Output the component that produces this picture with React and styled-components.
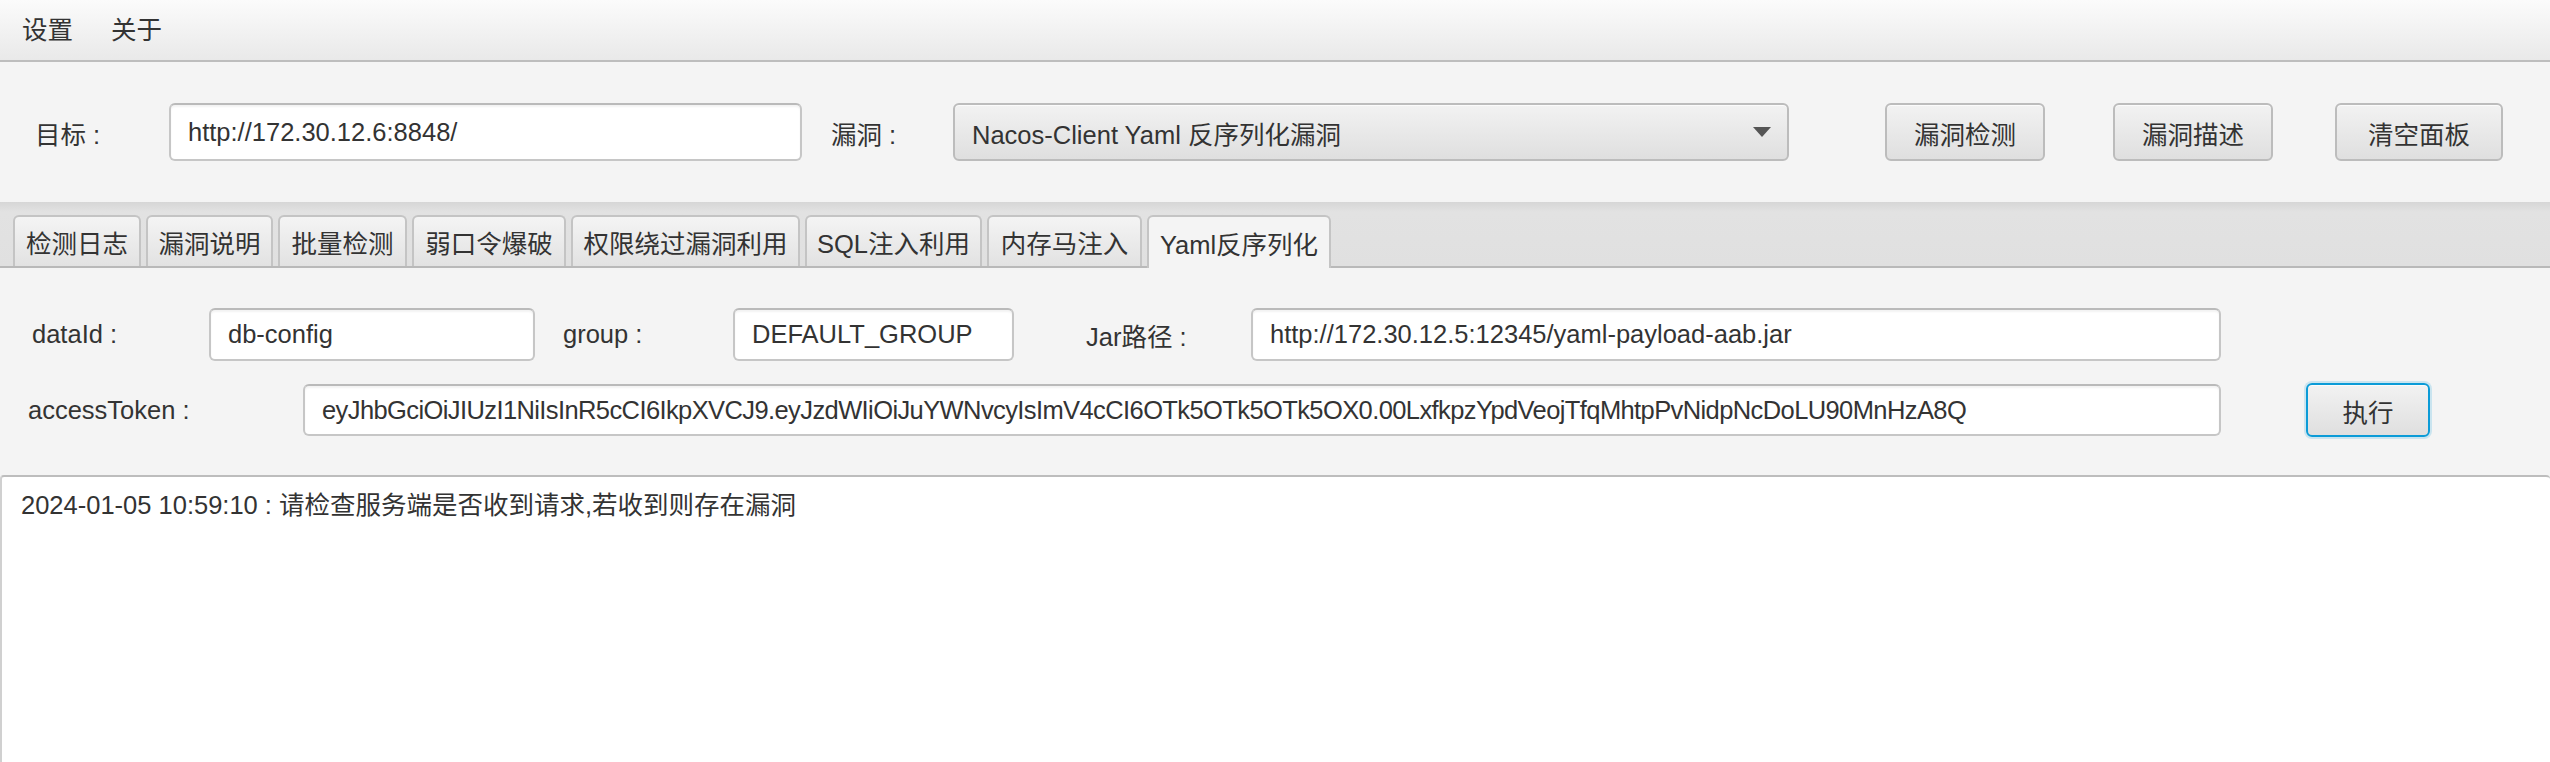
import React from "react";
import styled, { createGlobalStyle } from "styled-components";

const GlobalStyle = createGlobalStyle`
  html, body {
    margin: 0;
    padding: 0;
    background: #ffffff;
  }
  body {
    font-family: "Liberation Sans", "Noto Sans CJK SC", sans-serif;
    font-size: 25.5px;
    color: #333333;
  }
  * {
    box-sizing: border-box;
  }
`;

const tabs = [
  { title: "检测日志", w: 128 },
  { title: "漏洞说明", w: 127 },
  { title: "批量检测", w: 129 },
  { title: "弱口令爆破", w: 154 },
  { title: "权限绕过漏洞利用", w: 229 },
  { title: "SQL注入利用", w: 177 },
  { title: "内存马注入", w: 155 },
  { title: "Yaml反序列化", w: 184, active: true },
];

const App = () => {
  return (
    <Window>
      <GlobalStyle />
      <MenuBar>
        <MenuItem>设置</MenuItem>
        <MenuItem>关于</MenuItem>
      </MenuBar>

      <TopRow>
        <Label $w={134}>目标 :</Label>
        <TextField $w={633} defaultValue="http://172.30.12.6:8848/" />
        <Label $w={122} $ml={29}>漏洞 :</Label>
        <Select $w={836}>
          <span>Nacos-Client Yaml 反序列化漏洞</span>
          <svg width="18" height="10" viewBox="0 0 18 10">
            <polygon points="0,0 18,0 9,10" fill="#555555" />
          </svg>
        </Select>
        <Button $w={160} $ml={96}>漏洞检测</Button>
        <Button $w={160} $ml={68}>漏洞描述</Button>
        <Button $w={168} $ml={62}>清空面板</Button>
      </TopRow>

      <TabHeader>
        {tabs.map((t) => (
          <Tab key={t.title} $w={t.w} $active={t.active}>
            {t.title}
          </Tab>
        ))}
      </TabHeader>

      <TabContent>
        <FormRow $h={53} $pl={32}>
          <Label $w={177}>dataId :</Label>
          <TextField $w={326} $h={53} defaultValue="db-config" />
          <Label $w={170} $ml={28}>group :</Label>
          <TextField $w={281} $h={53} defaultValue="DEFAULT_GROUP" />
          <Label $w={165} $ml={72}>Jar路径 :</Label>
          <TextField
            $w={970}
            $h={53}
            defaultValue="http://172.30.12.5:12345/yaml-payload-aab.jar"
          />
        </FormRow>
        <FormRow $h={54} $pl={28}>
          <Label $w={275}>accessToken :</Label>
          <TextField
            $w={1918}
            $h={52}
            $ls={-0.6}
            defaultValue="eyJhbGciOiJIUzI1NiIsInR5cCI6IkpXVCJ9.eyJzdWIiOiJuYWNvcyIsImV4cCI6OTk5OTk5OTk5OX0.00LxfkpzYpdVeojTfqMhtpPvNidpNcDoLU90MnHzA8Q"
          />
          <Button $w={124} $h={54} $ml={85} $focused>执行</Button>
        </FormRow>
      </TabContent>

      <LogArea>2024-01-05 10:59:10 : 请检查服务端是否收到请求,若收到则存在漏洞</LogArea>
    </Window>
  );
};

const Window = styled.div`
  width: 2550px;
  height: 762px;
  display: flex;
  flex-direction: column;
  background: #f4f4f4;
  overflow: hidden;
`;

const MenuBar = styled.div`
  height: 62px;
  flex-shrink: 0;
  display: flex;
  align-items: center;
  padding-left: 3px;
  background: linear-gradient(to bottom, #fbfbfb, #e9e9e9);
  border-bottom: 2px solid #bdbdbd;
`;

const MenuItem = styled.div`
  padding: 0 19px;
  line-height: 60px;
  color: #333333;
`;

const TopRow = styled.div`
  height: 140px;
  flex-shrink: 0;
  display: flex;
  align-items: center;
  padding-left: 35px;
  background: #f4f4f4;
`;

const Label = styled.div`
  width: ${(p) => p.$w}px;
  margin-left: ${(p) => p.$ml || 0}px;
  flex-shrink: 0;
  white-space: pre;
  color: #333333;
`;

const TextField = styled.input`
  width: ${(p) => p.$w}px;
  height: ${(p) => p.$h || 58}px;
  flex-shrink: 0;
  padding: 0 17px;
  font: inherit;
  letter-spacing: ${(p) => p.$ls || 0}px;
  color: #333333;
  background: #ffffff;
  border: 2px solid #c6c6c6;
  border-top-color: #bababa;
  border-radius: 6px;
  box-shadow: inset 0 2px 2px rgba(0, 0, 0, 0.05);
  outline: none;
`;

const Select = styled.div`
  width: ${(p) => p.$w}px;
  height: 58px;
  flex-shrink: 0;
  display: flex;
  align-items: center;
  justify-content: space-between;
  padding: 0 16px 0 17px;
  background: linear-gradient(to bottom, #f2f2f2, #dfdfdf);
  border: 2px solid #bcbcbc;
  border-radius: 6px;
  box-shadow: inset 0 1px 0 #fbfbfb;
  white-space: nowrap;
`;

const Button = styled.div`
  width: ${(p) => p.$w}px;
  height: ${(p) => p.$h || 58}px;
  margin-left: ${(p) => p.$ml || 0}px;
  flex-shrink: 0;
  display: flex;
  align-items: center;
  justify-content: center;
  white-space: nowrap;
  background: linear-gradient(to bottom, #f2f2f2, #dfdfdf);
  border: 2px solid ${(p) => (p.$focused ? "#0b9bd7" : "#bcbcbc")};
  border-radius: 6px;
  box-shadow: ${(p) =>
    p.$focused
      ? "0 0 0 2px rgba(11, 155, 215, 0.18), inset 0 1px 0 #fbfbfb"
      : "inset 0 1px 0 #fbfbfb"};
`;

const TabHeader = styled.div`
  height: 66px;
  flex-shrink: 0;
  display: flex;
  align-items: flex-end;
  gap: 5px;
  padding-left: 13px;
  background: linear-gradient(to bottom, #d6d6d6, #e2e2e2 10px, #e0e0e0);
  border-bottom: 2px solid #b9b9b9;
`;

const Tab = styled.div`
  width: ${(p) => p.$w}px;
  height: ${(p) => (p.$active ? 53 : 51)}px;
  margin-bottom: ${(p) => (p.$active ? -2 : 0)}px;
  flex-shrink: 0;
  display: flex;
  align-items: center;
  justify-content: center;
  white-space: nowrap;
  background: ${(p) =>
    p.$active ? "#f4f4f4" : "linear-gradient(to bottom, #f4f4f4, #e2e2e2)"};
  border: 2px solid #c4c4c4;
  border-bottom: none;
  border-radius: 6px 6px 0 0;
`;

const TabContent = styled.div`
  flex-shrink: 0;
  display: flex;
  flex-direction: column;
  gap: 22px;
  padding: 40px 0 38px;
  background: #f4f4f4;
`;

const FormRow = styled.div`
  height: ${(p) => p.$h}px;
  display: flex;
  align-items: center;
  padding-left: ${(p) => p.$pl}px;
`;

const LogArea = styled.div`
  flex: 1;
  padding: 10px 19px;
  line-height: 36px;
  background: #ffffff;
  border-top: 2px solid #bdbdbd;
  border-left: 2px solid #d0d0d0;
  border-radius: 4px 4px 0 0;
  white-space: pre;
`;

export default App;
